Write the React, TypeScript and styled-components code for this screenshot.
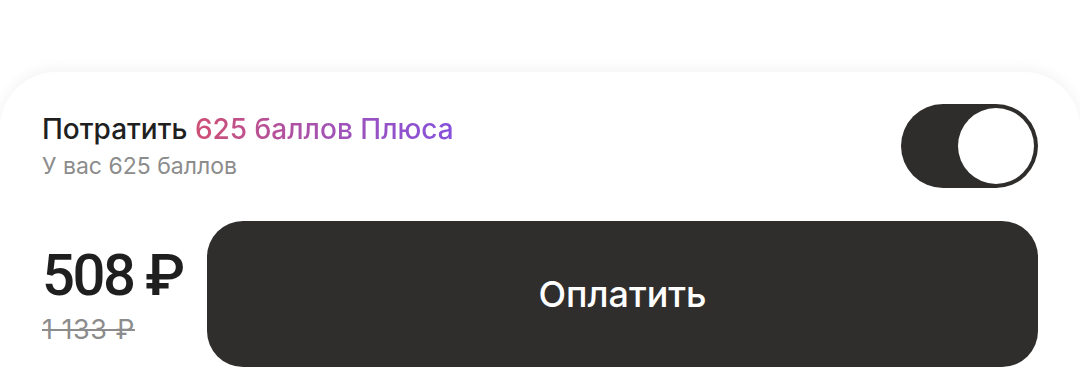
import React, { useState } from 'react';
import styled, { createGlobalStyle } from 'styled-components';

const GlobalStyle = createGlobalStyle`
  html, body {
    margin: 0;
    padding: 0;
    background: #ffffff;
    font-family: Inter, "Noto Sans", Roboto, sans-serif;
  }
`;

const Page = styled.div`
  width: 1080px;
  height: 388px;
  padding-top: 72px;
  box-sizing: border-box;
  overflow: hidden;
  background: #ffffff;
`;

const Sheet = styled.div`
  background: #ffffff;
  border-radius: 56px 56px 0 0;
  box-shadow: 0 -3px 14px rgba(0, 0, 0, 0.05);
  padding: 32px 42px 0 42px;
  height: 100%;
  box-sizing: border-box;
`;

const PlusRow = styled.div`
  display: flex;
  align-items: center;
  justify-content: space-between;
`;

const PlusText = styled.div`
  display: flex;
  flex-direction: column;
  gap: 5px;
`;

const Title = styled.div`
  font-size: 28px;
  line-height: 34px;
  font-weight: 500;
  color: #1f1f1f;
`;

const Points = styled.span`
  background: linear-gradient(90deg, #cf4f74 0%, #a052b8 55%, #8650dc 100%);
  -webkit-background-clip: text;
  background-clip: text;
  color: transparent;
`;

const Hint = styled.div`
  font-size: 23px;
  line-height: 30px;
  color: #8c8c8c;
`;

const Toggle = styled.button<{ on: boolean }>`
  width: 137px;
  height: 84px;
  border: none;
  border-radius: 42px;
  padding: 4px;
  background: ${p => (p.on ? '#2f2d2c' : '#d6d6d6')};
  display: flex;
  justify-content: ${p => (p.on ? 'flex-end' : 'flex-start')};
  cursor: pointer;
`;

const Knob = styled.span`
  width: 76px;
  height: 76px;
  border-radius: 50%;
  background: #ffffff;
`;

const PayRow = styled.div`
  display: flex;
  align-items: center;
  gap: 32px;
  margin-top: 33px;
`;

const Prices = styled.div`
  display: flex;
  flex-direction: column;
  width: 133px;
  flex-shrink: 0;
  padding-top: 2px;
`;

const Price = styled.div`
  font-family: Roboto, Inter, sans-serif;
  font-size: 58px;
  font-weight: 500;
  color: #1f1f1f;
  letter-spacing: -2.5px;
  line-height: 60px;
  white-space: nowrap;
`;

const OldPrice = styled.div`
  font-size: 27px;
  color: #8c8c8c;
  letter-spacing: 0.5px;
  text-decoration: line-through;
  text-decoration-thickness: 2px;
  margin-top: 8px;
  white-space: nowrap;
`;

const PayButton = styled.button`
  flex: 1;
  height: 146px;
  border: none;
  border-radius: 36px;
  background: #302e2d;
  color: #ffffff;
  font-family: inherit;
  font-size: 36px;
  font-weight: 500;
  cursor: pointer;
`;

export default function App() {
  const [usePoints, setUsePoints] = useState(true);

  return (
    <Page>
      <GlobalStyle />
      <Sheet>
        <PlusRow>
          <PlusText>
            <Title>
              Потратить <Points>625 баллов Плюса</Points>
            </Title>
            <Hint>У вас 625 баллов</Hint>
          </PlusText>
          <Toggle on={usePoints} onClick={() => setUsePoints(!usePoints)}>
            <Knob />
          </Toggle>
        </PlusRow>
        <PayRow>
          <Prices>
            <Price>508 ₽</Price>
            <OldPrice>1 133 ₽</OldPrice>
          </Prices>
          <PayButton>Оплатить</PayButton>
        </PayRow>
      </Sheet>
    </Page>
  );
}
